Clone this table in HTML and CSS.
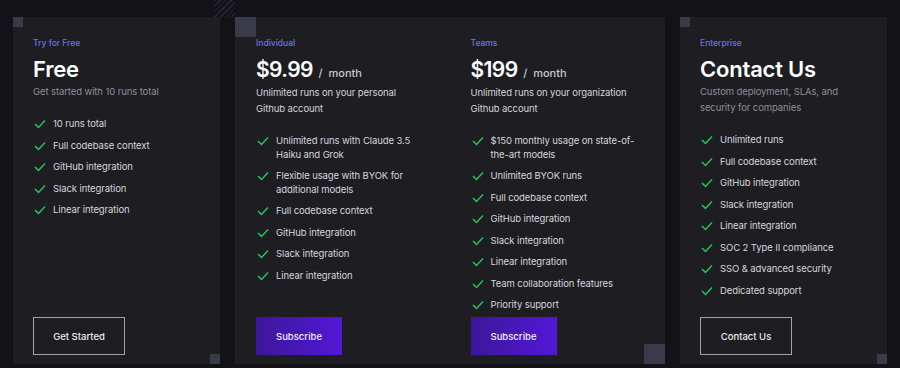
FILE: index.html
```html
<!DOCTYPE html>
<html>
<head>
<meta charset="UTF-8">
<link rel="stylesheet" href="styles.css">
<title>Pricing</title>
</head>
<body>
  <div class="hatch"></div>
  <div class="plans">
    <div class="card card-sm">
      <span class="corner corner-tl"></span>
      <div class="col">
        <p class="label">Try for Free</p>
        <h2 class="title">Free</h2>
        <p class="desc">Get started with 10 runs total</p>
        <ul class="features">
          <li><svg class="check" viewBox="0 0 14 12"><polyline points="2,6 5.5,9.5 12,2.5"/></svg><span>10 runs total</span></li>
          <li><svg class="check" viewBox="0 0 14 12"><polyline points="2,6 5.5,9.5 12,2.5"/></svg><span>Full codebase context</span></li>
          <li><svg class="check" viewBox="0 0 14 12"><polyline points="2,6 5.5,9.5 12,2.5"/></svg><span>GitHub integration</span></li>
          <li><svg class="check" viewBox="0 0 14 12"><polyline points="2,6 5.5,9.5 12,2.5"/></svg><span>Slack integration</span></li>
          <li><svg class="check" viewBox="0 0 14 12"><polyline points="2,6 5.5,9.5 12,2.5"/></svg><span>Linear integration</span></li>
        </ul>
        <a href="#" class="btn btn-outline">Get Started</a>
      </div>
      <span class="corner corner-br"></span>
    </div>

    <div class="card card-lg">
      <span class="corner corner-tl big"></span>
      <div class="col">
        <p class="label">Individual</p>
        <h2 class="price">$9.99 <span class="per">/&nbsp; month</span></h2>
        <p class="desc light">Unlimited runs on your personal Github account</p>
        <ul class="features">
          <li><svg class="check" viewBox="0 0 14 12"><polyline points="2,6 5.5,9.5 12,2.5"/></svg><span>Unlimited runs with Claude 3.5 Haiku and Grok</span></li>
          <li><svg class="check" viewBox="0 0 14 12"><polyline points="2,6 5.5,9.5 12,2.5"/></svg><span>Flexible usage with BYOK for additional models</span></li>
          <li><svg class="check" viewBox="0 0 14 12"><polyline points="2,6 5.5,9.5 12,2.5"/></svg><span>Full codebase context</span></li>
          <li><svg class="check" viewBox="0 0 14 12"><polyline points="2,6 5.5,9.5 12,2.5"/></svg><span>GitHub integration</span></li>
          <li><svg class="check" viewBox="0 0 14 12"><polyline points="2,6 5.5,9.5 12,2.5"/></svg><span>Slack integration</span></li>
          <li><svg class="check" viewBox="0 0 14 12"><polyline points="2,6 5.5,9.5 12,2.5"/></svg><span>Linear integration</span></li>
        </ul>
        <a href="#" class="btn btn-fill">Subscribe</a>
      </div>
      <div class="col">
        <p class="label">Teams</p>
        <h2 class="price">$199 <span class="per">/&nbsp; month</span></h2>
        <p class="desc light">Unlimited runs on your organization Github account</p>
        <ul class="features">
          <li><svg class="check" viewBox="0 0 14 12"><polyline points="2,6 5.5,9.5 12,2.5"/></svg><span>$150 monthly usage on state-of-the-art models</span></li>
          <li><svg class="check" viewBox="0 0 14 12"><polyline points="2,6 5.5,9.5 12,2.5"/></svg><span>Unlimited BYOK runs</span></li>
          <li><svg class="check" viewBox="0 0 14 12"><polyline points="2,6 5.5,9.5 12,2.5"/></svg><span>Full codebase context</span></li>
          <li><svg class="check" viewBox="0 0 14 12"><polyline points="2,6 5.5,9.5 12,2.5"/></svg><span>GitHub integration</span></li>
          <li><svg class="check" viewBox="0 0 14 12"><polyline points="2,6 5.5,9.5 12,2.5"/></svg><span>Slack integration</span></li>
          <li><svg class="check" viewBox="0 0 14 12"><polyline points="2,6 5.5,9.5 12,2.5"/></svg><span>Linear integration</span></li>
          <li><svg class="check" viewBox="0 0 14 12"><polyline points="2,6 5.5,9.5 12,2.5"/></svg><span>Team collaboration features</span></li>
          <li><svg class="check" viewBox="0 0 14 12"><polyline points="2,6 5.5,9.5 12,2.5"/></svg><span>Priority support</span></li>
        </ul>
        <a href="#" class="btn btn-fill">Subscribe</a>
      </div>
      <span class="corner corner-br big"></span>
    </div>

    <div class="card card-sm">
      <span class="corner corner-tl"></span>
      <div class="col">
        <p class="label">Enterprise</p>
        <h2 class="title">Contact Us</h2>
        <p class="desc">Custom deployment, SLAs, and security for companies</p>
        <ul class="features">
          <li><svg class="check" viewBox="0 0 14 12"><polyline points="2,6 5.5,9.5 12,2.5"/></svg><span>Unlimited runs</span></li>
          <li><svg class="check" viewBox="0 0 14 12"><polyline points="2,6 5.5,9.5 12,2.5"/></svg><span>Full codebase context</span></li>
          <li><svg class="check" viewBox="0 0 14 12"><polyline points="2,6 5.5,9.5 12,2.5"/></svg><span>GitHub integration</span></li>
          <li><svg class="check" viewBox="0 0 14 12"><polyline points="2,6 5.5,9.5 12,2.5"/></svg><span>Slack integration</span></li>
          <li><svg class="check" viewBox="0 0 14 12"><polyline points="2,6 5.5,9.5 12,2.5"/></svg><span>Linear integration</span></li>
          <li><svg class="check" viewBox="0 0 14 12"><polyline points="2,6 5.5,9.5 12,2.5"/></svg><span>SOC 2 Type II compliance</span></li>
          <li><svg class="check" viewBox="0 0 14 12"><polyline points="2,6 5.5,9.5 12,2.5"/></svg><span>SSO &amp; advanced security</span></li>
          <li><svg class="check" viewBox="0 0 14 12"><polyline points="2,6 5.5,9.5 12,2.5"/></svg><span>Dedicated support</span></li>
        </ul>
        <a href="#" class="btn btn-outline">Contact Us</a>
      </div>
      <span class="corner corner-br"></span>
    </div>
  </div>
</body>
</html>
```
FILE: styles.css
```css
body {
  margin: 0;
  background-color: #131317;
  font-family: 'Inter', 'Noto Sans', sans-serif;
  color: #e6e6ea;
  position: relative;
  height: 368px;
  overflow: hidden;
}

.hatch {
  position: absolute;
  left: 214px;
  top: 0;
  width: 21px;
  height: 17px;
  background: repeating-linear-gradient(135deg, #26262c 0 1px, transparent 1px 4px);
}

.plans {
  display: flex;
  gap: 15px;
  padding: 17px 13px 4px;
  height: 347px;
}

.card {
  position: relative;
  display: flex;
  background-color: #1d1d22;
}
.card-sm {
  width: 207px;
}
.card-lg {
  width: 430px;
}

.corner {
  position: absolute;
  width: 10px;
  height: 10px;
  background-color: #3b3a4b;
}
.corner.big {
  width: 21px;
  height: 20px;
}
.corner-tl {
  left: 0;
  top: 0;
}
.corner-br {
  right: 0;
  bottom: 0;
}

.col {
  flex: 1;
  display: flex;
  flex-direction: column;
  padding: 20px 20px 9px;
}
.card-lg .col {
  padding-left: 21px;
  padding-right: 30px;
}
.card-lg .col + .col {
  padding-left: 20px;
}

.label {
  margin: 0;
  font-size: 8.5px;
  line-height: 12px;
  font-weight: 500;
  color: #6f70f0;
}

.title {
  margin: 6px 0 0;
  font-size: 22px;
  line-height: 28px;
  font-weight: 600;
  color: #fff;
  letter-spacing: -0.2px;
}

.price {
  margin: 7px 0 0;
  font-size: 21px;
  line-height: 28px;
  font-weight: 600;
  color: #fff;
  letter-spacing: -0.6px;
}
.per {
  font-size: 11px;
  font-weight: 500;
  color: #c9c9cf;
  margin-left: 1px;
  letter-spacing: 0;
}

.desc {
  margin: 1px 0 0;
  font-size: 9.5px;
  line-height: 16px;
  color: #8e8e98;
  letter-spacing: -0.1px;
}
.desc.light {
  color: #d4d4da;
  margin-top: -2px;
}

.features {
  list-style: none;
  margin: 17px 0 0;
  padding: 0;
  display: flex;
  flex-direction: column;
  gap: 8px;
}
.features li {
  display: flex;
  align-items: flex-start;
  gap: 6px;
  font-size: 9.5px;
  line-height: 13.5px;
  color: #d6d6dc;
  letter-spacing: -0.1px;
}
.check {
  flex: none;
  width: 14px;
  height: 12px;
  margin-top: 1px;
  fill: none;
  stroke: #22c55e;
  stroke-width: 1.5;
}

.btn {
  margin-top: auto;
  display: flex;
  align-items: center;
  justify-content: center;
  height: 38px;
  font-size: 9.5px;
  font-weight: 500;
  color: #ececf0;
  text-decoration: none;
  box-sizing: border-box;
}
.btn-outline {
  width: 92px;
  border: 1px solid #a3a3aa;
}
.btn-fill {
  width: 86px;
  background: linear-gradient(90deg, #3c1799 0%, #5217d8 100%);
}
```
